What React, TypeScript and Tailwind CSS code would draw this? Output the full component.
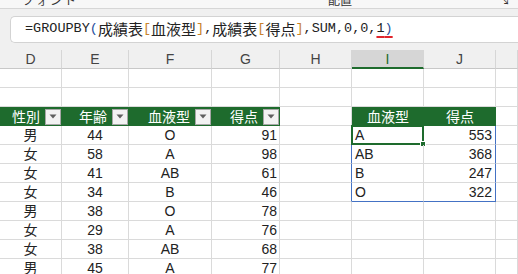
const GREEN = "#1e6b2d";

const COLS = ["D", "E", "F", "G", "H", "I", "J", ""];

const scores = [
  ["男", "44", "O", "91"],
  ["女", "58", "A", "98"],
  ["女", "41", "AB", "61"],
  ["女", "34", "B", "46"],
  ["男", "38", "O", "78"],
  ["女", "29", "A", "76"],
  ["女", "38", "AB", "68"],
  ["男", "45", "A", "77"],
];

const grouped = [
  ["A", "553"],
  ["AB", "368"],
  ["B", "247"],
  ["O", "322"],
];

const cell = "h-[19px] border-r border-b border-[#dadada] flex items-center leading-none";

function FilterButton() {
  return (
    <span className="flex h-[16px] w-[16px] shrink-0 items-center justify-center border border-[#a6a6a6] bg-[#f2f2f2]">
      <svg width="8" height="5" viewBox="0 0 8 5">
        <path d="M0.5 0.5h7L4 4.5z" fill="#5f5f5f" />
      </svg>
    </span>
  );
}

function HeaderCell({ label, filter = true }: { label: string; filter?: boolean }) {
  return (
    <div
      className={`h-[19px] flex items-center leading-none text-white text-[14px] bg-[#1e6b2d] ${
        filter ? "justify-end gap-[5px] pr-[1px]" : "justify-center"
      }`}
    >
      <span>{label}</span>
      {filter ? <FilterButton /> : null}
    </div>
  );
}

export default function App() {
  return (
    <div
      className="h-[274px] w-[518px] overflow-hidden bg-white text-[#222]"
      style={{ fontFamily: '"Liberation Sans", "Noto Sans CJK JP", sans-serif' }}
    >
      {/* ribbon group labels, cut off at the top */}
      <div className="h-[9px] overflow-hidden border-b border-[#d6d6d6] bg-[#f7f7f7]">
        <div className="-mt-[6px] flex h-[14px] items-center text-[12px] leading-[14px] text-[#333]">
          <span className="ml-[22px] w-[60px] tracking-[2px]">フォント</span>
          <span className="ml-[246px]">配置</span>
          <span className="ml-auto mr-[8px] text-[11px]">↘</span>
        </div>
      </div>

      {/* formula bar */}
      <div className="h-[41px] bg-[#f0f0f0] pl-[10px] pt-[7px]">
        <div className="flex h-[27px] items-center rounded-l-[5px] border border-r-0 border-[#d3d3d3] bg-white pl-[14px] whitespace-nowrap">
          <span className="text-[13.5px]" style={{ fontFamily: '"Liberation Mono", monospace' }}>
            =GROUPBY<span className="text-[#1f4e9c]">(</span>
          </span>
          <span className="text-[15px]" style={{ fontFamily: '"Noto Sans CJK JP", sans-serif' }}>成績表</span>
          <span className="text-[13.5px] text-[#c9822b]" style={{ fontFamily: '"Liberation Mono", monospace' }}>[</span>
          <span className="text-[15px]" style={{ fontFamily: '"Noto Sans CJK JP", sans-serif' }}>血液型</span>
          <span className="text-[13.5px]" style={{ fontFamily: '"Liberation Mono", monospace' }}>
            <span className="text-[#c9822b]">]</span>,
          </span>
          <span className="text-[15px]" style={{ fontFamily: '"Noto Sans CJK JP", sans-serif' }}>成績表</span>
          <span className="text-[13.5px] text-[#c9822b]" style={{ fontFamily: '"Liberation Mono", monospace' }}>[</span>
          <span className="text-[15px]" style={{ fontFamily: '"Noto Sans CJK JP", sans-serif' }}>得点</span>
          <span className="text-[13.5px]" style={{ fontFamily: '"Liberation Mono", monospace' }}>
            <span className="text-[#c9822b]">]</span>,SUM,0,0,
            <span className="underline decoration-[#e0242b] decoration-[1.5px] underline-offset-[4px]">
              1<span className="text-[#1f4e9c]">)</span>
            </span>
          </span>
        </div>
      </div>

      {/* sheet */}
      <div className="grid grid-cols-[62px_67px_83px_68px_72px_72px_72px_1fr] text-[14px]">
        {COLS.map((c) => (
          <div
            key={c || "K"}
            className={`h-[19px] flex items-center justify-center leading-none border-r border-[#d6d6d6] ${
              c === "I"
                ? "bg-[#d6d6d6] border-b-2 border-b-[#1e6b2d] text-[#1e6b2d]"
                : "bg-[#f0f0f0] border-b border-b-[#c8c8c8] text-[#444]"
            }`}
          >
            {c}
          </div>
        ))}

        {[0, 1].map((r) =>
          COLS.map((c) => <div key={`blank${r}${c}`} className={cell} />)
        )}

        <HeaderCell label="性別" />
        <HeaderCell label="年齢" />
        <HeaderCell label="血液型" />
        <HeaderCell label="得点" />
        <div className={cell} />
        <HeaderCell label="血液型" filter={false} />
        <HeaderCell label="得点" filter={false} />
        <div className={cell} />

        {scores.map((row, i) => {
          const g = grouped[i];
          const last = i === grouped.length - 1;
          return [
            <div key={`d${i}`} className={`${cell} justify-center`}>{row[0]}</div>,
            <div key={`e${i}`} className={`${cell} justify-center`}>{row[1]}</div>,
            <div key={`f${i}`} className={`${cell} justify-center`}>{row[2]}</div>,
            <div key={`g${i}`} className={`${cell} justify-end pr-[2px]`}>{row[3]}</div>,
            <div key={`h${i}`} className={`${cell} ${g ? "border-r-[#4472c4]" : ""}`} />,
            <div
              key={`i${i}`}
              className={`${cell} relative pl-[3px] ${last ? "border-b-[#4472c4]" : ""}`}
            >
              {g ? g[0] : ""}
              {i === 0 ? (
                <span className="absolute -left-px -top-px -right-px -bottom-px border-2 border-[#1e6b2d]">
                  <span className="absolute -bottom-[4px] -right-[4px] h-[6px] w-[6px] border border-white bg-[#1e6b2d]" />
                </span>
              ) : null}
            </div>,
            <div
              key={`j${i}`}
              className={`${cell} justify-end pr-[3px] ${g ? "border-r-[#4472c4]" : ""} ${
                last ? "border-b-[#4472c4]" : ""
              }`}
            >
              {g ? g[1] : ""}
            </div>,
            <div key={`k${i}`} className={cell} />,
          ];
        })}
      </div>
    </div>
  );
}
